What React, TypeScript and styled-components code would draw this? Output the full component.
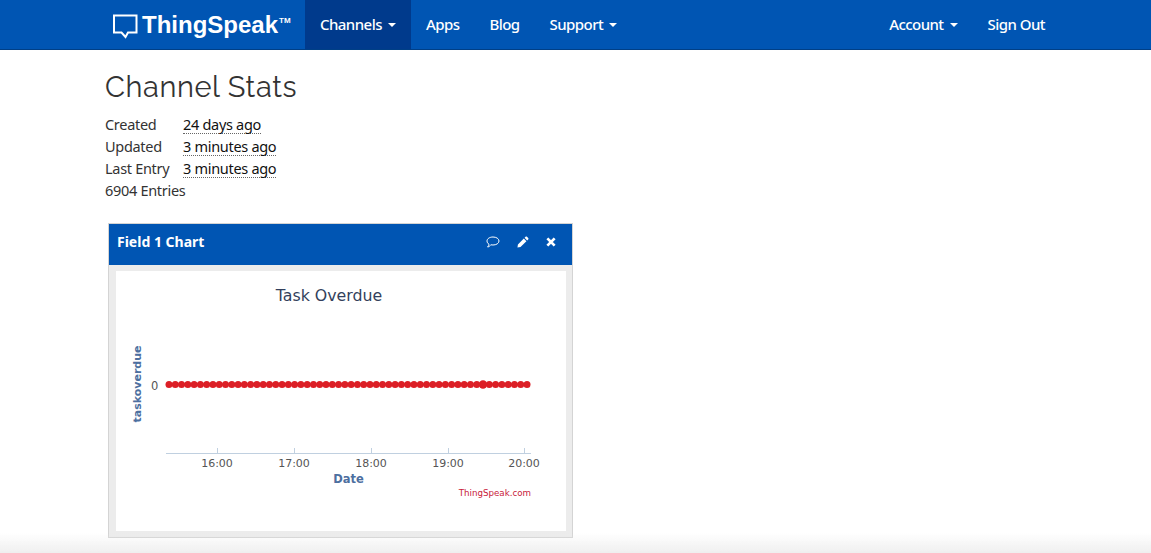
import React from "react";
import styled, { createGlobalStyle } from "styled-components";

const GlobalStyle = createGlobalStyle`
  html, body {
    margin: 0;
    padding: 0;
    background: #fff;
    height: 553px;
    overflow: hidden;
  }
  body {
    font-family: "Noto Sans", "Open Sans", sans-serif;
    color: #333;
  }
`;

const Navbar = styled.nav`
  box-sizing: border-box;
  height: 50px;
  background: #0055b3;
  border-bottom: 1px solid #003f86;
  padding: 0 91px 0 113px;
  display: flex;
  align-items: stretch;
`;

const Brand = styled.div`
  display: flex;
  align-items: center;
  width: 192px;
  color: #fff;
  font-family: "Liberation Sans", Arial, sans-serif;
  font-weight: 700;
  font-size: 24px;
  svg {
    margin-right: 4px;
    margin-top: 3px;
  }
  sup {
    font-size: 8px;
    font-weight: 700;
    margin: -9px 0 0 1px;
  }
`;

const NavItem = styled.a<{ $active?: boolean }>`
  display: flex;
  align-items: center;
  gap: 6px;
  padding: 0 15px 2px;
  height: 49px;
  box-sizing: border-box;
  color: #fff;
  font-size: 15px;
  font-weight: 500;
  letter-spacing: -0.55px;
  background: ${(p) => (p.$active ? "#003a8c" : "transparent")};
`;

const Caret = styled.span`
  width: 0;
  height: 0;
  border-left: 4px solid transparent;
  border-right: 4px solid transparent;
  border-top: 4px solid #fff;
  margin-top: 3px;
`;

const Spacer = styled.div`
  flex: 1;
`;

const Page = styled.main`
  padding: 0 0 0 105px;
`;

const Title = styled.h1`
  margin: 0;
  padding-top: 19px;
  font-family: "Raleway", "Lato", sans-serif;
  font-weight: 400;
  font-size: 29px;
  line-height: 37px;
  letter-spacing: 0.6px;
  color: #333;
`;

const Stats = styled.div`
  margin-top: 7px;
  display: grid;
  grid-template-columns: 78px auto;
  justify-content: start;
  font-size: 14.5px;
  line-height: 22px;
  letter-spacing: -0.3px;
`;

const Value = styled.span`
  justify-self: start;
  color: #111;
  line-height: 18px;
  height: 18px;
  margin-top: 2px;
  border-bottom: 1px dotted #666;
`;

const Entries = styled.div`
  grid-column: 1 / 3;
`;

const Card = styled.section`
  box-sizing: border-box;
  width: 465px;
  height: 315px;
  margin: 22px 0 0 3px;
  border: 1px solid #d4d4d4;
  background: #ececec;
`;

const CardHeader = styled.header`
  box-sizing: border-box;
  height: 41px;
  background: #0055b3;
  color: #fff;
  display: flex;
  align-items: center;
  padding: 0 16px 6px 8px;
`;

const CardTitle = styled.h2`
  flex: 1;
  margin: 0;
  font-size: 14px;
  font-weight: 700;
  letter-spacing: 0;
`;

const CardIcons = styled.div`
  display: flex;
  align-items: center;
  gap: 17px;
`;

const ChartBox = styled.div`
  margin: 6px 6px 0 7px;
  height: 260px;
  background: #fff;
  svg {
    display: block;
  }
  text {
    font-family: "DejaVu Sans", sans-serif;
  }
`;

const BottomFade = styled.div`
  position: fixed;
  left: 0;
  right: 0;
  bottom: 0;
  height: 20px;
  background: linear-gradient(rgba(235, 235, 235, 0), rgba(235, 235, 235, 0.8));
  pointer-events: none;
`;

const BubbleLogo = () => (
  <svg width="25" height="25" viewBox="0 0 25 25" fill="none" stroke="#fff" strokeWidth="2">
    <path d="M1 1.5H23.5V18.5H15L12.5 23L8.5 18.5H1Z" />
  </svg>
);

const CommentIcon = () => (
  <svg width="14" height="14" viewBox="0 0 14 14" fill="none" stroke="#fff" strokeWidth="1">
    <path d="M7 2C10.2 2 13 3.6 13 6C13 8.4 10.2 10 7 10C6.2 10 5.5 9.9 4.8 9.8C4.2 10.7 3 11.9 1.6 12C2.4 11.2 2.9 10.2 3 9.2C1.800 8.500 1 7.400 1 6C1 3.600 3.800 2 7 2Z" />
  </svg>
);

const PencilIcon = () => (
  <svg width="12" height="12" viewBox="0 0 13 13" fill="#fff">
    <path d="M9.300 0.900C9.800 0.400 10.300 0.400 10.800 0.900L12.100 2.200C12.600 2.700 12.600 3.200 12.100 3.700L11 4.800L8.200 2ZM7.400 2.800L10.200 5.600L3.800 12L0.500 12.500L1 9.200Z" />
  </svg>
);

const CloseIcon = () => (
  <svg width="10" height="10" viewBox="0 0 11 11" stroke="#fff" strokeWidth="3">
    <path d="M1.500 1.500L9.500 9.500M9.500 1.500L1.500 9.500" />
  </svg>
);

// chart area is 450x260, origin at page (116, 271)
const dotXs = Array.from({ length: 58 }, (_, i) => 53 + (i * 358) / 57);
const hours = [
  { label: "16:00", x: 101 },
  { label: "17:00", x: 178 },
  { label: "18:00", x: 255 },
  { label: "19:00", x: 332 },
  { label: "20:00", x: 408 },
];

const Chart = () => (
  <svg width="450" height="260" viewBox="0 0 450 260">
    <text x="213" y="30" textAnchor="middle" fontSize="15.800" fill="#333f5c">
      Task Overdue
    </text>
    <text
      transform="translate(25 113) rotate(-90)"
      textAnchor="middle"
      fontSize="11"
      fontWeight="700"
      fill="#4d6f9f"
    >
      taskoverdue
    </text>
    <text x="35" y="118.500" fontSize="11.500" fill="#555">
      0
    </text>
    <path d="M50 113.500H413" stroke="#dc1f26" strokeWidth="2" />
    {dotXs.map((x) => (
      <circle key={x} cx={x} cy="113.500" r="3.500" fill="#dc1f26" />
    ))}
    <circle cx="367" cy="113.500" r="4.200" fill="#dc1f26" />
    <path d="M50 182.500H415" stroke="#c0d0e0" />
    {hours.map((h) => (
      <g key={h.label}>
        <path d={`M${h.x + 0.5} 177V182`} stroke="#c0d0e0" />
        <text x={h.x} y="196" textAnchor="middle" fontSize="11" fill="#555">
          {h.label}
        </text>
      </g>
    ))}
    <text x="232.500" y="212" textAnchor="middle" fontSize="11.500" fontWeight="700" fill="#4d6f9f">
      Date
    </text>
    <text x="415" y="225" textAnchor="end" fontSize="8.700" fill="#c8203a">
      ThingSpeak.com
    </text>
  </svg>
);

export default function App() {
  return (
    <>
      <GlobalStyle />
      <Navbar>
        <Brand>
          <BubbleLogo />
          ThingSpeak<sup>TM</sup>
        </Brand>
        <NavItem $active>
          Channels <Caret />
        </NavItem>
        <NavItem>Apps</NavItem>
        <NavItem>Blog</NavItem>
        <NavItem>
          Support <Caret />
        </NavItem>
        <Spacer />
        <NavItem>
          Account <Caret />
        </NavItem>
        <NavItem>Sign Out</NavItem>
      </Navbar>
      <Page>
        <Title>Channel Stats</Title>
        <Stats>
          <span>Created</span>
          <Value>24 days ago</Value>
          <span>Updated</span>
          <Value>3 minutes ago</Value>
          <span>Last Entry</span>
          <Value>3 minutes ago</Value>
          <Entries>6904 Entries</Entries>
        </Stats>
        <Card>
          <CardHeader>
            <CardTitle>Field 1 Chart</CardTitle>
            <CardIcons>
              <CommentIcon />
              <PencilIcon />
              <CloseIcon />
            </CardIcons>
          </CardHeader>
          <ChartBox>
            <Chart />
          </ChartBox>
        </Card>
      </Page>
      <BottomFade />
    </>
  );
}
